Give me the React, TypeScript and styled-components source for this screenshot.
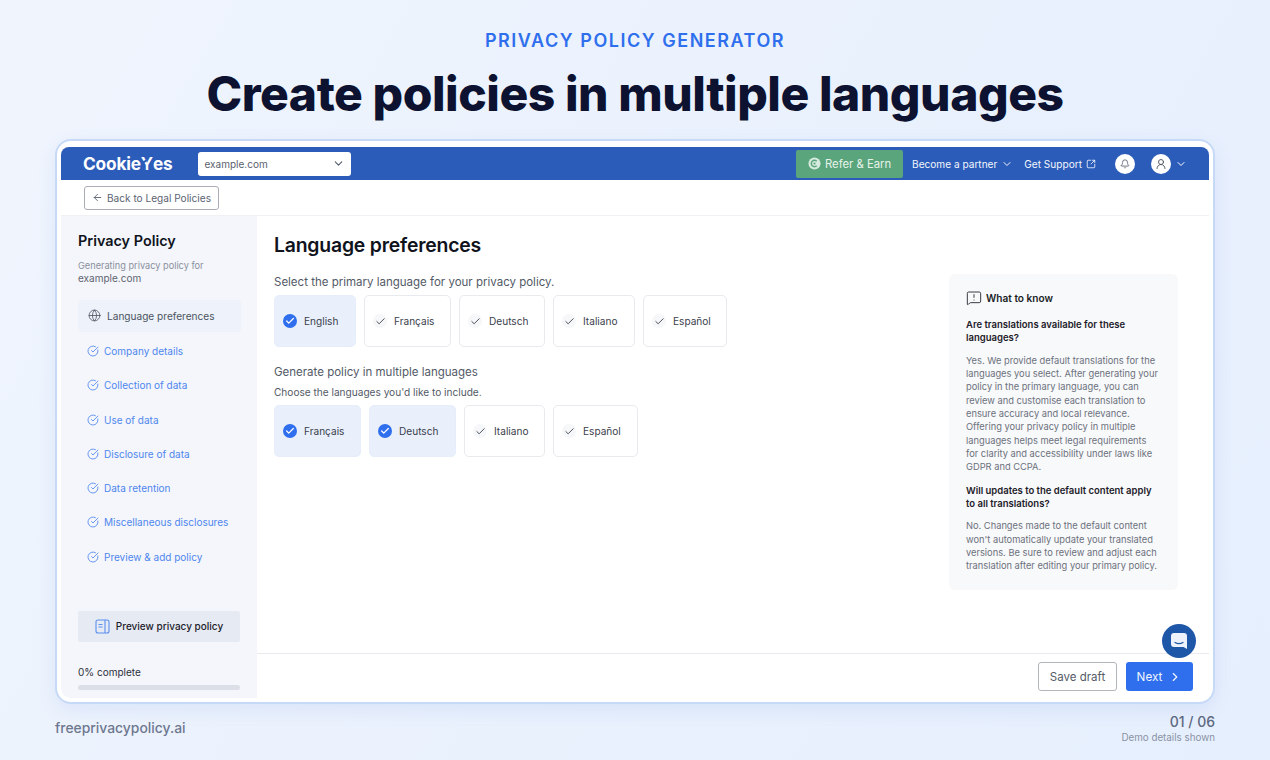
import styled, { createGlobalStyle } from 'styled-components'
import {
  ArrowLeft,
  Bell,
  Check,
  ChevronDown,
  ChevronRight,
  CircleCheckBig,
  Globe,
  MessageSquareWarning,
  SquareArrowOutUpRight,
  UserRound,
} from 'lucide-react'

const steps = [
  'Company details',
  'Collection of data',
  'Use of data',
  'Disclosure of data',
  'Data retention',
  'Miscellaneous disclosures',
  'Preview & add policy',
]

const primary = [
  { name: 'English', on: true, width: 82 },
  { name: 'Français', on: false, width: 87 },
  { name: 'Deutsch', on: false, width: 86 },
  { name: 'Italiano', on: false, width: 82 },
  { name: 'Español', on: false, width: 84 },
]

const extra = [
  { name: 'Français', on: true, width: 87 },
  { name: 'Deutsch', on: true, width: 87 },
  { name: 'Italiano', on: false, width: 81 },
  { name: 'Español', on: false, width: 85 },
]

function LangRow({ items }: { items: { name: string; on: boolean; width: number }[] }) {
  return (
    <Chips>
      {items.map((l) => (
        <Chip key={l.name} $on={l.on} $w={l.width}>
          <Tick $on={l.on}>
            <Check size={l.on ? 10 : 11} strokeWidth={l.on ? 3 : 2} />
          </Tick>
          {l.name}
        </Chip>
      ))}
    </Chips>
  )
}

export default function App() {
  return (
    <Page>
      <GlobalStyle />
      <Eyebrow>PRIVACY POLICY GENERATOR</Eyebrow>
      <Title>Create policies in multiple languages</Title>

      <Frame>
        <TopBar>
          <Logo>
            Cookie<LogoY>Y</LogoY>es
          </Logo>
          <DomainSelect>
            example.com
            <ChevronDown size={13} color="#555d6b" />
          </DomainSelect>
          <TopRight>
            <ReferButton>
              <svg width="13" height="13" viewBox="0 0 14 14">
                <circle cx="7" cy="7" r="6.5" fill="#d7eadf" />
                <path d="M9.4 4.6A3.4 3.4 0 1 0 9.4 9.4" fill="none" stroke="#5ba57c" strokeWidth="1.6" />
                <circle cx="7" cy="7" r="1.2" fill="#5ba57c" />
              </svg>
              Refer &amp; Earn
            </ReferButton>
            <PartnerLink>
              Become a partner
              <ChevronDown size={12} />
            </PartnerLink>
            <SupportLink>
              Get Support
              <SquareArrowOutUpRight size={10} />
            </SupportLink>
            <RoundIcon $first>
              <Bell size={10} />
            </RoundIcon>
            <UserMenu>
              <RoundIcon>
                <UserRound size={12} />
              </RoundIcon>
              <ChevronDown size={12} color="#fff" />
            </UserMenu>
          </TopRight>
        </TopBar>

        <SubBar>
          <BackButton>
            <ArrowLeft size={11} />
            Back to Legal Policies
          </BackButton>
        </SubBar>

        <Body>
          <Sidebar>
            <SideTitle>Privacy Policy</SideTitle>
            <SideNote>
              Generating privacy policy for <strong>example.com</strong>
            </SideNote>
            <ActiveStep>
              <Globe size={13} strokeWidth={1.5} />
              Language preferences
            </ActiveStep>
            <Steps>
              {steps.map((s) => (
                <Step key={s}>
                  <CircleCheckBig size={12} strokeWidth={1.7} />
                  {s}
                </Step>
              ))}
            </Steps>
            <PreviewButton>
              <svg width="15" height="15" viewBox="0 0 15 15" fill="none" stroke="#5b8ff0" strokeWidth="1.1">
                <rect x="1" y="1" width="13" height="13" rx="2" />
                <path d="M10 1v13M3.5 5.5H7.5M3.5 8H7.5" />
              </svg>
              Preview privacy policy
            </PreviewButton>
            <Progress>0% complete</Progress>
            <ProgressTrack />
          </Sidebar>

          <Main>
            <MainScroll>
              <Form>
                <Heading>Language preferences</Heading>
                <Prompt>Select the primary language for your privacy policy.</Prompt>
                <LangRow items={primary} />
                <Prompt $second>Generate policy in multiple languages</Prompt>
                <SubPrompt>Choose the languages you'd like to include.</SubPrompt>
                <LangRow items={extra} />
              </Form>
              <InfoCard>
                <InfoHead>
                  <MessageSquareWarning size={16} strokeWidth={1.3} />
                  What to know
                </InfoHead>
                <InfoQuestion>Are translations available for these languages?</InfoQuestion>
                <InfoText>
                  Yes. We provide default translations for the languages you select. After generating your policy in
                  the primary language, you can review and customise each translation to ensure accuracy and local
                  relevance. Offering your privacy policy in multiple languages helps meet legal requirements for
                  clarity and accessibility under laws like GDPR and CCPA.
                </InfoText>
                <InfoQuestion>Will updates to the default content apply to all translations?</InfoQuestion>
                <InfoText>
                  No. Changes made to the default content won't automatically update your translated versions. Be sure
                  to review and adjust each translation after editing your primary policy.
                </InfoText>
              </InfoCard>
            </MainScroll>
            <Actions>
              <SaveButton>Save draft</SaveButton>
              <NextButton>
                Next
                <ChevronRight size={14} />
              </NextButton>
            </Actions>
          </Main>
        </Body>

        <ChatBubble>
          <svg width="20" height="20" viewBox="0 0 20 20">
            <path d="M5 2h10a3 3 0 0 1 3 3v13l-3.5-2H5a3 3 0 0 1-3-3V5a3 3 0 0 1 3-3z" fill="#eef3fb" />
            <path d="M6 11.5c2.4 1.3 5.6 1.3 8 0" fill="none" stroke="#1f57a8" strokeWidth="1.3" strokeLinecap="round" />
          </svg>
        </ChatBubble>
      </Frame>

      <Footer>
        <Site>freeprivacypolicy.ai</Site>
        <Pager>
          <PageCount>01 / 06</PageCount>
          <Demo>Demo details shown</Demo>
        </Pager>
      </Footer>
    </Page>
  )
}

const GlobalStyle = createGlobalStyle`
  html, body { margin: 0; padding: 0; }
  body { font-family: Inter, "Liberation Sans", sans-serif; }
`

const Page = styled.div`
  width: 1270px;
  height: 760px;
  overflow: hidden;
  box-sizing: border-box;
  padding: 30px 55px 0;
  display: flex;
  flex-direction: column;
  background: linear-gradient(120deg, #f0f5fd 0%, #e9f1fd 55%, #e6effd 100%);
`

const Eyebrow = styled.div`
  text-align: center;
  font-size: 18px;
  line-height: 21px;
  font-weight: 600;
  letter-spacing: 1.53px;
  color: #2f6fed;
`

const Title = styled.h1`
  margin: 11px 0 0;
  text-align: center;
  font-size: 48px;
  line-height: 64px;
  font-weight: 800;
  letter-spacing: -0.45px;
  color: #0c1230;
`

const Frame = styled.div`
  position: relative;
  margin-top: 13px;
  height: 565px;
  box-sizing: border-box;
  padding: 6px 4px 4.5px;
  display: flex;
  flex-direction: column;
  background: #fff;
  border: 2px solid #c6daf8;
  border-radius: 16px;
  box-shadow: 0 6px 18px rgba(90, 130, 210, 0.12);
`

const TopBar = styled.header`
  flex: none;
  height: 33px;
  display: flex;
  align-items: center;
  padding: 0 22px 0 22px;
  background: #2c5cb9;
  border-radius: 8px 8px 0 0;
`

const Logo = styled.div`
  font-size: 17.3px;
  font-weight: 700;
  letter-spacing: -0.2px;
  color: #fff;
`

const LogoY = styled.span`
  position: relative;
  color: #fff;
  font-weight: 600;
  &::after {
    content: '';
    position: absolute;
    left: 0.5px;
    top: 7.5px;
    width: 6px;
    height: 1.6px;
    background: #2c5cb9;
    transform: rotate(-35deg);
  }
`

const DomainSelect = styled.div`
  margin-left: 25px;
  width: 153px;
  height: 24px;
  box-sizing: border-box;
  padding: 0 6px 0 7px;
  display: flex;
  align-items: center;
  justify-content: space-between;
  font-size: 10px;
  color: #5a6270;
  background: #fff;
  border-radius: 3px;
`

const TopRight = styled.div`
  margin-left: auto;
  display: flex;
  align-items: center;
`

const ReferButton = styled.div`
  width: 107px;
  height: 28px;
  box-sizing: border-box;
  display: flex;
  align-items: center;
  justify-content: center;
  gap: 4px;
  font-size: 11.3px;
  color: #e6f3ea;
  background: #5ba57c;
  border-radius: 2px;
`

const PartnerLink = styled.div`
  margin-left: 9px;
  display: flex;
  align-items: center;
  gap: 4px;
  font-size: 10.1px;
  color: #f2f6fd;
`

const SupportLink = styled.div`
  margin-left: 11px;
  display: flex;
  align-items: center;
  gap: 4px;
  font-size: 10.1px;
  color: #f2f6fd;
`

const RoundIcon = styled.div<{ $first?: boolean }>`
  width: 20px;
  height: 20px;
  margin-left: ${(p) => (p.$first ? '19px' : '0')};
  display: flex;
  align-items: center;
  justify-content: center;
  color: #555d6b;
  background: #fff;
  border-radius: 50%;
`

const UserMenu = styled.div`
  margin-left: 16px;
  display: flex;
  align-items: center;
  gap: 4px;
`

const SubBar = styled.div`
  flex: none;
  height: 36px;
  box-sizing: border-box;
  padding-left: 23px;
  display: flex;
  align-items: center;
  border-bottom: 1px solid #f0f1f4;
`

const BackButton = styled.div`
  width: 135px;
  height: 24px;
  box-sizing: border-box;
  display: flex;
  align-items: center;
  justify-content: center;
  gap: 4px;
  font-size: 10.1px;
  color: #5c6472;
  background: #fff;
  border: 1px solid #a9aeb6;
  border-radius: 3px;
`

const Body = styled.div`
  flex: 1;
  min-height: 0;
  display: flex;
`

const Sidebar = styled.aside`
  flex: none;
  width: 196px;
  box-sizing: border-box;
  padding: 16px 17px 0;
  display: flex;
  flex-direction: column;
  background: #f4f6fb;
  border-bottom-left-radius: 10px;
`

const SideTitle = styled.div`
  font-size: 14.4px;
  line-height: 18px;
  font-weight: 600;
  color: #10131c;
`

const SideNote = styled.div`
  margin-top: 9px;
  font-size: 9.2px;
  line-height: 13.4px;
  color: #8b909b;
  width: 135px;
  strong { font-weight: 400; font-size: 10px; color: #5e6470; }
`

const ActiveStep = styled.div`
  margin-top: 14px;
  height: 32px;
  margin-right: -1px;
  padding-left: 10px;
  display: flex;
  align-items: center;
  gap: 6px;
  font-size: 10.1px;
  color: #4c5461;
  background: #edf2fb;
  border-radius: 3px;
`

const Steps = styled.div`
  margin-top: 2px;
  display: flex;
  flex-direction: column;
`

const Step = styled.div`
  height: 34.3px;
  padding-left: 9px;
  display: flex;
  align-items: center;
  gap: 5px;
  font-size: 10px;
  color: #4f86ee;
`

const PreviewButton = styled.div`
  margin-top: auto;
  height: 31px;
  display: flex;
  align-items: center;
  justify-content: center;
  gap: 6px;
  font-size: 10px;
  font-weight: 500;
  color: #1d222c;
  background: #e6eaf2;
  border-radius: 2px;
`

const Progress = styled.div`
  margin-top: 24px;
  font-size: 10px;
  line-height: 13px;
  color: #2c303a;
`

const ProgressTrack = styled.div`
  margin: 6px 0 8px;
  height: 5px;
  background: #dcdfe7;
  border-radius: 3px;
`

const Main = styled.main`
  flex: 1;
  min-width: 0;
  display: flex;
  flex-direction: column;
`

const MainScroll = styled.div`
  flex: 1;
  min-height: 0;
  padding: 0 31px 0 17px;
  display: flex;
  justify-content: space-between;
  align-items: flex-start;
`

const Form = styled.div`
  display: flex;
  flex-direction: column;
`

const Heading = styled.h2`
  margin: 16px 0 0;
  font-size: 19.4px;
  line-height: 26px;
  font-weight: 600;
  letter-spacing: -0.2px;
  color: #10131c;
`

const Prompt = styled.div<{ $second?: boolean }>`
  margin-top: ${(p) => (p.$second ? '17px' : '16px')};
  font-size: 11.5px;
  line-height: 16px;
  color: #535a67;
`

const SubPrompt = styled.div`
  margin: 5px 0 1px;
  font-size: 10.1px;
  line-height: 14px;
  color: #535a67;
`

const Chips = styled.div`
  margin-top: 5px;
  display: flex;
  gap: 8px;
`

const Chip = styled.div<{ $on: boolean; $w: number }>`
  width: ${(p) => p.$w}px;
  height: 52px;
  box-sizing: border-box;
  padding-left: 8px;
  display: flex;
  align-items: center;
  gap: 7px;
  font-size: 10.1px;
  color: #3b414d;
  background: ${(p) => (p.$on ? '#e9f0fc' : '#fff')};
  border: 1px solid ${(p) => (p.$on ? '#e6eefb' : '#e8eaee')};
  border-radius: 5px;
`

const Tick = styled.span<{ $on: boolean }>`
  width: 14px;
  height: 14px;
  flex: none;
  display: flex;
  align-items: center;
  justify-content: center;
  color: ${(p) => (p.$on ? '#fff' : '#3c424e')};
  background: ${(p) => (p.$on ? '#2f6fed' : '#f6f7f9')};
  border-radius: 50%;
`

const InfoCard = styled.aside`
  margin-top: 58px;
  width: 229px;
  height: 316px;
  box-sizing: border-box;
  padding: 16px 18px 16px 17px;
  background: #f8f9fb;
  border-radius: 6px;
`

const InfoHead = styled.div`
  padding-bottom: 2px;
  display: flex;
  align-items: center;
  gap: 4px;
  font-size: 10.1px;
  line-height: 16px;
  font-weight: 600;
  color: #1a1d25;
`

const InfoQuestion = styled.div`
  margin-top: 10px;
  font-size: 9.5px;
  line-height: 13.3px;
  font-weight: 600;
  color: #1d2029;
`

const InfoText = styled.p`
  margin: 9px 0 10px;
  font-size: 9.3px;
  line-height: 13.35px;
  color: #6c717c;
`

const Actions = styled.div`
  flex: none;
  height: 44.5px;
  box-sizing: border-box;
  padding: 2px 16px 0 0;
  display: flex;
  align-items: center;
  justify-content: flex-end;
  gap: 9px;
  border-top: 1px solid #e9eaed;
`

const SaveButton = styled.div`
  width: 79px;
  height: 29px;
  box-sizing: border-box;
  display: flex;
  align-items: center;
  justify-content: center;
  font-size: 11.5px;
  color: #555b67;
  background: #fff;
  border: 1px solid #b1b5bc;
  border-radius: 3px;
`

const NextButton = styled.div`
  width: 67px;
  height: 29px;
  display: flex;
  align-items: center;
  justify-content: center;
  gap: 6px;
  font-size: 11.7px;
  color: #f0f5ff;
  background: #2f6fed;
  border-radius: 3px;
`

const ChatBubble = styled.div`
  position: absolute;
  right: 17px;
  bottom: 44px;
  width: 34px;
  height: 34px;
  display: flex;
  align-items: center;
  justify-content: center;
  background: #1f57a8;
  border-radius: 50%;
`

const Footer = styled.footer`
  margin-top: 9px;
  display: flex;
  justify-content: space-between;
  align-items: flex-start;
`

const Site = styled.div`
  margin-top: 6px;
  font-size: 13.9px;
  line-height: 18px;
  font-weight: 500;
  color: #6e7890;
`

const Pager = styled.div`
  text-align: right;
`

const PageCount = styled.div`
  font-size: 14px;
  line-height: 18px;
  font-weight: 500;
  color: #5e6880;
`

const Demo = styled.div`
  margin-top: 0;
  font-size: 9.8px;
  line-height: 14px;
  color: #8a92a5;
`
